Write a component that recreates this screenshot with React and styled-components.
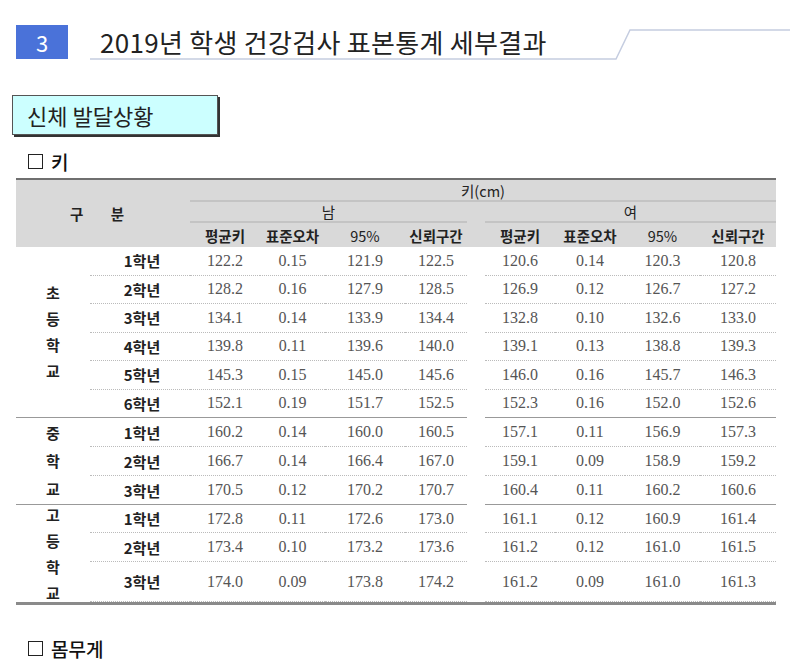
import React from "react";
import styled, { createGlobalStyle } from "styled-components";

const Global = createGlobalStyle`
  body { margin: 0; background: #fff; font-family: "Noto Sans CJK KR", "Noto Sans", sans-serif; }
`;

const Page = styled.div`
  width: 800px; height: 665px; overflow: hidden; position: relative;
  padding: 25px 24px 0 16px; box-sizing: border-box;
`;
const TitleRow = styled.div`display: flex; align-items: center; height: 34px; position: relative;`;
const Num = styled.div`
  width: 52px; height: 34px; background: #4a72d9; color: #fff; font-size: 22px;
  display: flex; align-items: center; justify-content: center;
`;
const TitleText = styled.div`margin-left: 32px; font-size: 26px; color: #222; letter-spacing: 0.3px; line-height: 1;`;
const TitleLine = styled.svg`position: absolute; left: 74px; top: 0; pointer-events: none;`;

const SectionBox = styled.div`
  margin: 36px 0 0 -4px; width: 206px; height: 40px; background: #ccffff;
  border: 1px solid #555; box-shadow: 2px 2px 0 #333;
  display: flex; align-items: center; padding-left: 14px; box-sizing: border-box;
  font-size: 22px; color: #222;
`;
const Sub = styled.div`
  margin: 13px 0 0 12px; font-size: 19px; font-weight: 500; color: #111; height: 26px;
  display: flex; align-items: center; gap: 8px;
`;
const Sq = styled.span`width: 13px; height: 13px; border: 1.5px solid #222; display: inline-block;`;

const COLS = "74px 100px 70px 65px 80px 62px 18px 70px 70px 75px 76px";
const Head = styled.div`
  display: grid; grid-template-columns: ${COLS}; grid-template-rows: 22px 21px 24px;
  background: #d9d9d9; border-top: 2px solid #6f6f6f; margin-top: 4px;
  font-size: 14.5px; color: #222;
`;
const HC = styled.div`
  display: flex; align-items: center; justify-content: center;
  grid-column: ${(p) => p.$col}; grid-row: ${(p) => p.$row};
  border-bottom: ${(p) => (p.$line ? "2px solid #c4c4c4" : "none")};
  letter-spacing: ${(p) => p.$ls || 0};
  font-weight: ${(p) => (p.$b ? 600 : 400)};
`;
const Body = styled.div`
  display: grid; grid-template-columns: ${COLS};
  grid-template-rows: repeat(6, 28.5px) repeat(3, 29px) 28px 29px 40px;
  border-bottom: 3px solid #8a8a8a;
`;
const Group = styled.div`
  grid-column: 1; grid-row: ${(p) => p.$row};
  display: flex; flex-direction: column; align-items: center; justify-content: center;
  gap: ${(p) => p.$gap}px; font-size: 15px; line-height: 18px; font-weight: 600; color: #222;
  border-bottom: ${(p) => (p.$last ? "none" : "1px solid #999")};
`;
const Cell = styled.div`
  display: flex; align-items: center; justify-content: center;
  border-bottom: ${(p) => (p.$end ? (p.$final ? "none" : "1px solid #999") : "1px dotted #bbb")};
  font-family: ${(p) => (p.$grade ? '"Noto Sans CJK KR", sans-serif' : '"Liberation Serif", serif')};
  font-size: ${(p) => (p.$grade ? "15px" : "16px")};
  font-weight: ${(p) => (p.$grade ? 600 : 400)};
  color: ${(p) => (p.$grade ? "#222" : "#555")};
  padding-left: ${(p) => (p.$grade ? "4px" : 0)};
`;
const Gap = styled.div``;

const data = [
  ["1학년", "122.2 0.15 121.9 122.5 120.6 0.14 120.3 120.8"],
  ["2학년", "128.2 0.16 127.9 128.5 126.9 0.12 126.7 127.2"],
  ["3학년", "134.1 0.14 133.9 134.4 132.8 0.10 132.6 133.0"],
  ["4학년", "139.8 0.11 139.6 140.0 139.1 0.13 138.8 139.3"],
  ["5학년", "145.3 0.15 145.0 145.6 146.0 0.16 145.7 146.3"],
  ["6학년", "152.1 0.19 151.7 152.5 152.3 0.16 152.0 152.6"],
  ["1학년", "160.2 0.14 160.0 160.5 157.1 0.11 156.9 157.3"],
  ["2학년", "166.7 0.14 166.4 167.0 159.1 0.09 158.9 159.2"],
  ["3학년", "170.5 0.12 170.2 170.7 160.4 0.11 160.2 160.6"],
  ["1학년", "172.8 0.11 172.6 173.0 161.1 0.12 160.9 161.4"],
  ["2학년", "173.4 0.10 173.2 173.6 161.2 0.12 161.0 161.5"],
  ["3학년", "174.0 0.09 173.8 174.2 161.2 0.09 161.0 161.3"],
];
const ends = [5, 8];

export default function App() {
  return (
    <Page>
      <Global />
      <TitleRow>
        <Num>3</Num>
        <TitleText>2019년 학생 건강검사 표본통계 세부결과</TitleText>
        <TitleLine width="700" height="40">
          <polyline points="0,34 526,34 540,5 700,5" fill="none" stroke="#c5cde0" strokeWidth="1.5" />
        </TitleLine>
      </TitleRow>
      <SectionBox>신체 발달상황</SectionBox>
      <Sub><Sq />키</Sub>
      <Head>
        <HC $col="1 / 3" $row="1 / 4" $ls="12px" $b>구 분</HC>
        <HC $col="3 / 12" $row="1" $line>키(cm)</HC>
        <HC $col="3 / 7" $row="2" $line>남</HC>
        <HC $col="8 / 12" $row="2" $line>여</HC>
        {["평균키", "표준오차", "95%", "신뢰구간"].map((t, i) => (
          <HC key={"m" + i} $col={3 + i} $row="3" $b={i !== 2}>{t}</HC>
        ))}
        {["평균키", "표준오차", "95%", "신뢰구간"].map((t, i) => (
          <HC key={"f" + i} $col={8 + i} $row="3" $b={i !== 2}>{t}</HC>
        ))}
      </Head>
      <Body>
        <Group $row="1 / 7" $gap={8}><span>초</span><span>등</span><span>학</span><span>교</span></Group>
        <Group $row="7 / 10" $gap={10}><span>중</span><span>학</span><span>교</span></Group>
        <Group $row="10 / 13" $gap={8} $last><span>고</span><span>등</span><span>학</span><span>교</span></Group>
        {data.map(([g, v], r) => {
          const end = ends.includes(r);
          const fin = r === 11;
          const nums = v.split(" ");
          return (
            <React.Fragment key={r}>
              <Cell $grade $end={end} $final={fin} style={{ gridColumn: 2, gridRow: r + 1 }}>{g}</Cell>
              {nums.slice(0, 4).map((n, i) => (
                <Cell key={i} $end={end} $final={fin} style={{ gridColumn: 3 + i, gridRow: r + 1 }}>{n}</Cell>
              ))}
              <Gap style={{ gridColumn: 7, gridRow: r + 1 }} />
              {nums.slice(4).map((n, i) => (
                <Cell key={"f" + i} $end={end} $final={fin} style={{ gridColumn: 8 + i, gridRow: r + 1 }}>{n}</Cell>
              ))}
            </React.Fragment>
          );
        })}
      </Body>
      <Sub style={{ marginTop: 30 }}><Sq />몸무게</Sub>
    </Page>
  );
}
